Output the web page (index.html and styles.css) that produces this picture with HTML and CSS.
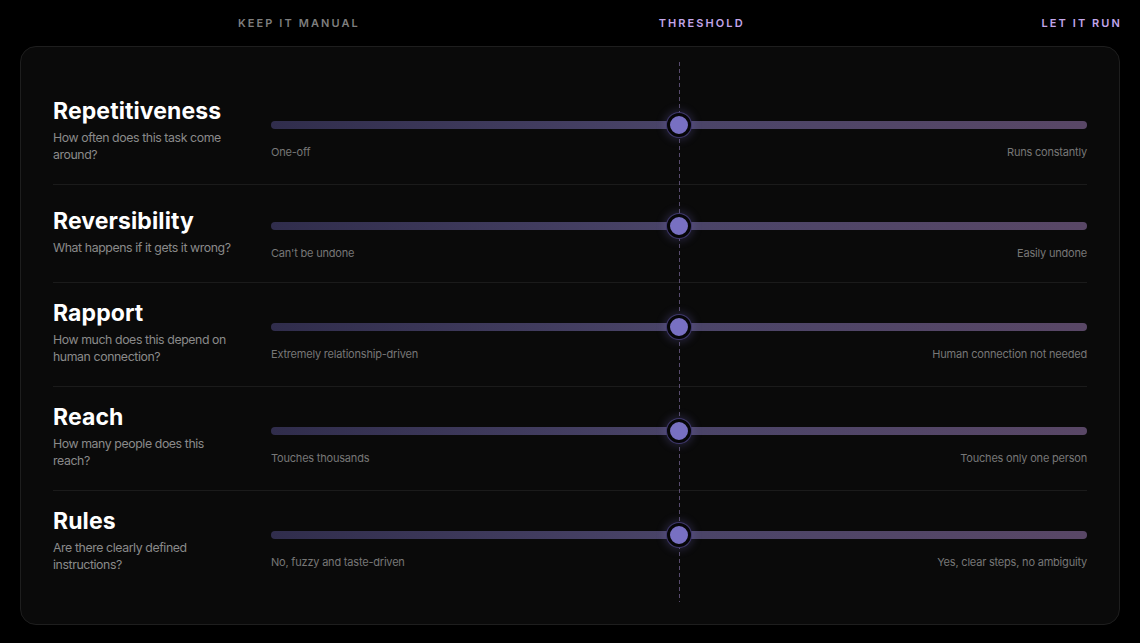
FILE: index.html
```html
<!DOCTYPE html>
<html lang="en">
<head>
<meta charset="utf-8">
<title>Automation threshold</title>
<link rel="stylesheet" href="styles.css">
</head>
<body>
<div class="page">
  <header class="scale">
    <span class="scale-label manual">KEEP IT MANUAL</span>
    <span class="scale-label accent">THRESHOLD</span>
    <span class="scale-label accent">LET IT RUN</span>
  </header>
  <main class="card">
    <div class="threshold"></div>

    <section class="row">
      <div class="info">
        <h2 class="title">Repetitiveness</h2>
        <p class="desc">How often does this task come around?</p>
      </div>
      <div class="slider">
        <div class="track-area"><div class="track"></div><div class="thumb"></div></div>
        <div class="ends"><span>One-off</span><span>Runs constantly</span></div>
      </div>
    </section>

    <section class="row">
      <div class="info">
        <h2 class="title">Reversibility</h2>
        <p class="desc">What happens if it gets it wrong?</p>
      </div>
      <div class="slider">
        <div class="track-area"><div class="track"></div><div class="thumb"></div></div>
        <div class="ends"><span>Can't be undone</span><span>Easily undone</span></div>
      </div>
    </section>

    <section class="row">
      <div class="info">
        <h2 class="title">Rapport</h2>
        <p class="desc">How much does this depend on human connection?</p>
      </div>
      <div class="slider">
        <div class="track-area"><div class="track"></div><div class="thumb"></div></div>
        <div class="ends"><span>Extremely relationship-driven</span><span>Human connection not needed</span></div>
      </div>
    </section>

    <section class="row">
      <div class="info">
        <h2 class="title">Reach</h2>
        <p class="desc">How many people does this reach?</p>
      </div>
      <div class="slider">
        <div class="track-area"><div class="track"></div><div class="thumb"></div></div>
        <div class="ends"><span>Touches thousands</span><span>Touches only one person</span></div>
      </div>
    </section>

    <section class="row">
      <div class="info">
        <h2 class="title">Rules</h2>
        <p class="desc">Are there clearly defined instructions?</p>
      </div>
      <div class="slider">
        <div class="track-area"><div class="track"></div><div class="thumb"></div></div>
        <div class="ends"><span>No, fuzzy and taste-driven</span><span>Yes, clear steps, no ambiguity</span></div>
      </div>
    </section>
  </main>
</div>
</body>
</html>
```

FILE: styles.css
```css
* { box-sizing: border-box; }
html, body { margin: 0; padding: 0; background: #000; }
body {
  font-family: Inter, "Noto Sans", "Liberation Sans", sans-serif;
  color: #fff;
  width: 1140px;
  height: 643px;
  overflow: hidden;
}
.page { padding: 0 20px; }

.scale {
  height: 46px;
  display: flex;
  align-items: center;
  justify-content: space-between;
  padding-left: 218px;
}
.scale-label {
  font-size: 11px;
  font-weight: 600;
  letter-spacing: 0.19em;
  line-height: 14px;
}
.scale-label.manual { color: #7e7e7e; }
.scale-label.accent { color: #c3a6ea; margin-right: -2px; }

.card {
  position: relative;
  background: #0a0a0a;
  border: 1px solid #1e1e1e;
  border-radius: 16px;
  padding: 34px 32px 30px;
}

.threshold {
  position: absolute;
  top: 15px;
  bottom: 22px;
  left: calc(32px + 218px + (100% - 64px - 218px) / 2);
  width: 1px;
  background: repeating-linear-gradient(to bottom, rgba(150, 128, 190, 0.55) 0 4px, transparent 4px 7px);
}

.row {
  display: grid;
  grid-template-columns: 218px 1fr;
  align-items: center;
  padding: 17px 0 18px;
  border-bottom: 1px solid #1b1b1b;
}
.row:last-child { border-bottom: none; }

.info { padding-right: 36px; }
.title {
  margin: 0;
  font-size: 23px;
  line-height: 26px;
  font-weight: 700;
  letter-spacing: 0.1px;
  color: #fff;
}
.desc {
  margin: 5px 0 3px;
  font-size: 12.3px;
  line-height: 17px;
  letter-spacing: -0.4px;
  color: #8a8a8a;
}

.slider { padding: 12px 0 2px; }
.track-area {
  position: relative;
  height: 24px;
  display: flex;
  align-items: center;
}
.track {
  width: 100%;
  height: 8px;
  border-radius: 4px;
  background: linear-gradient(to right, #302d4c, #4a4468 50%, #594766);
}
.thumb {
  position: absolute;
  left: 50%;
  top: 50%;
  width: 24px;
  height: 24px;
  margin: -12px 0 0 -12px;
  border-radius: 50%;
  background: #7870c2;
  border: 3px solid #060608;
  box-shadow: 0 0 0 1px #3f386c, 0 0 10px 2px rgba(120, 110, 200, 0.3);
}
.thumb::before {
  content: "";
  position: absolute;
  left: 50%;
  margin-left: -0.5px;
  top: -22px;
  bottom: -22px;
  width: 1px;
  z-index: -1;
  background: linear-gradient(to bottom, transparent, rgba(170, 140, 220, 0.7) 40%, rgba(170, 140, 220, 0.7) 60%, transparent);
}
.ends {
  margin-top: 7px;
  display: flex;
  justify-content: space-between;
  font-size: 11px;
  line-height: 17px;
  letter-spacing: -0.2px;
  color: #777;
}
```
